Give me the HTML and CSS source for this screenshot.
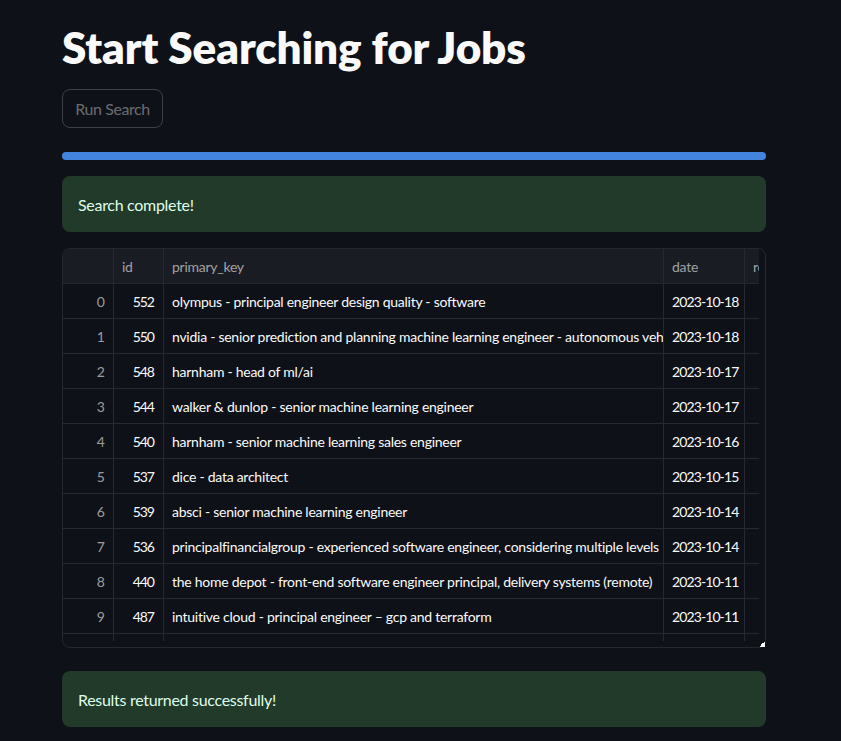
FILE: index.html
```html
<!DOCTYPE html>
<html lang="en">
<head>
<meta charset="utf-8">
<title>Start Searching for Jobs</title>
<link rel="stylesheet" href="styles.css">
</head>
<body>
<main class="page">
  <h1 class="title">Start Searching for Jobs</h1>
  <button class="btn" disabled>Run Search</button>
  <div class="progress"><div class="progress-fill"></div></div>
  <div class="alert">Search complete!</div>
  <div class="table-wrap">
    <div class="viewport">
      <div class="grid">
        <div class="hd c-idx"></div>
        <div class="hd c-id">id</div>
        <div class="hd c-pk">primary_key</div>
        <div class="hd c-date">date</div>
        <div class="hd c-more">re</div>

        <div class="c c-idx">0</div><div class="c c-id">552</div><div class="c c-pk">olympus - principal engineer design quality - software</div><div class="c c-date">2023-10-18</div><div class="c c-more"></div>
        <div class="c c-idx">1</div><div class="c c-id">550</div><div class="c c-pk">nvidia - senior prediction and planning machine learning engineer - autonomous vehicles</div><div class="c c-date">2023-10-18</div><div class="c c-more"></div>
        <div class="c c-idx">2</div><div class="c c-id">548</div><div class="c c-pk">harnham - head of ml/ai</div><div class="c c-date">2023-10-17</div><div class="c c-more"></div>
        <div class="c c-idx">3</div><div class="c c-id">544</div><div class="c c-pk">walker &amp; dunlop - senior machine learning engineer</div><div class="c c-date">2023-10-17</div><div class="c c-more"></div>
        <div class="c c-idx">4</div><div class="c c-id">540</div><div class="c c-pk">harnham - senior machine learning sales engineer</div><div class="c c-date">2023-10-16</div><div class="c c-more"></div>
        <div class="c c-idx">5</div><div class="c c-id">537</div><div class="c c-pk">dice - data architect</div><div class="c c-date">2023-10-15</div><div class="c c-more"></div>
        <div class="c c-idx">6</div><div class="c c-id">539</div><div class="c c-pk">absci - senior machine learning engineer</div><div class="c c-date">2023-10-14</div><div class="c c-more"></div>
        <div class="c c-idx">7</div><div class="c c-id">536</div><div class="c c-pk">principalfinancialgroup - experienced software engineer, considering multiple levels</div><div class="c c-date">2023-10-14</div><div class="c c-more"></div>
        <div class="c c-idx">8</div><div class="c c-id">440</div><div class="c c-pk">the home depot - front-end software engineer principal, delivery systems (remote)</div><div class="c c-date">2023-10-11</div><div class="c c-more"></div>
        <div class="c c-idx">9</div><div class="c c-id">487</div><div class="c c-pk">intuitive cloud - principal engineer – gcp and terraform</div><div class="c c-date">2023-10-11</div><div class="c c-more"></div>
        <div class="c c-idx"></div><div class="c c-id"></div><div class="c c-pk"></div><div class="c c-date"></div><div class="c c-more"></div>
      </div>
    </div>
    <div class="resize-handle"></div>
  </div>
  <div class="alert alert-bottom">Results returned successfully!</div>
</main>
</body>
</html>
```

FILE: styles.css
```css
* { box-sizing: border-box; }
html, body { margin: 0; padding: 0; }
body {
  background: #0e1117;
  color: #fafafa;
  font-family: "Lato", "Liberation Sans", sans-serif;
  overflow: hidden;
}
.page {
  width: 704px;
  margin-left: 62px;
  padding-top: 20px;
  display: flex;
  flex-direction: column;
  align-items: flex-start;
}
.title {
  margin: 0;
  font-size: 44px;
  font-weight: 800;
  line-height: 54px;
  letter-spacing: -0.1px;
  color: #fafafa;
}
.btn {
  margin-top: 15px;
  height: 39px;
  width: 101px;
  padding: 0;
  border: 1px solid rgba(250, 250, 250, 0.2);
  border-radius: 8px;
  background: transparent;
  color: rgba(250, 250, 250, 0.4);
  font-family: inherit;
  font-size: 16px;
  letter-spacing: -0.4px;
}
.progress {
  margin-top: 24px;
  width: 100%;
  height: 8px;
  border-radius: 4px;
  background: #262730;
  overflow: hidden;
}
.progress-fill {
  width: 100%;
  height: 100%;
  background: #4385de;
}
.alert {
  margin-top: 16px;
  width: 100%;
  height: 56px;
  padding: 0 16px;
  display: flex;
  align-items: center;
  border-radius: 8px;
  background: #213a2a;
  color: #dffde9;
  font-size: 16px;
  letter-spacing: -0.3px;
}
.alert-bottom { margin-top: 23px; }
.table-wrap {
  position: relative;
  margin-top: 16px;
  width: 100%;
  height: 400px;
  border: 1px solid rgba(250, 250, 250, 0.1);
  border-radius: 8px;
  padding: 0 6px 6px 0;
}
.viewport {
  width: 100%;
  height: 100%;
  overflow: hidden;
  border-top-left-radius: 7px;
}
.grid {
  display: grid;
  grid-template-columns: 51px 50px 500px 81px 80px;
  grid-auto-rows: 35px;
  font-size: 14px;
  letter-spacing: -0.26px;
}
.hd, .c {
  border-right: 1px solid #262931;
  border-bottom: 1px solid #262931;
  display: flex;
  align-items: center;
  white-space: nowrap;
  overflow: hidden;
  text-overflow: clip;
  padding: 0 8px;
}
.hd {
  background: #1a1c24;
  color: rgba(250, 250, 250, 0.6);
}
.c { background: #0e1117; color: #fafafa; }
.c-idx { justify-content: flex-end; padding-right: 9px; }
.c.c-idx { color: rgba(250, 250, 250, 0.6); letter-spacing: -0.9px; }
.c.c-id { justify-content: flex-end; padding-right: 9px; letter-spacing: -1px; }
.c-pk { padding-left: 8px; }
.c.c-date { letter-spacing: -0.9px; }
.resize-handle {
  position: absolute;
  right: 0;
  bottom: 0;
  width: 6px;
  height: 6px;
  background: linear-gradient(to bottom right, transparent 50%, #fafafa 50%);
}
```
